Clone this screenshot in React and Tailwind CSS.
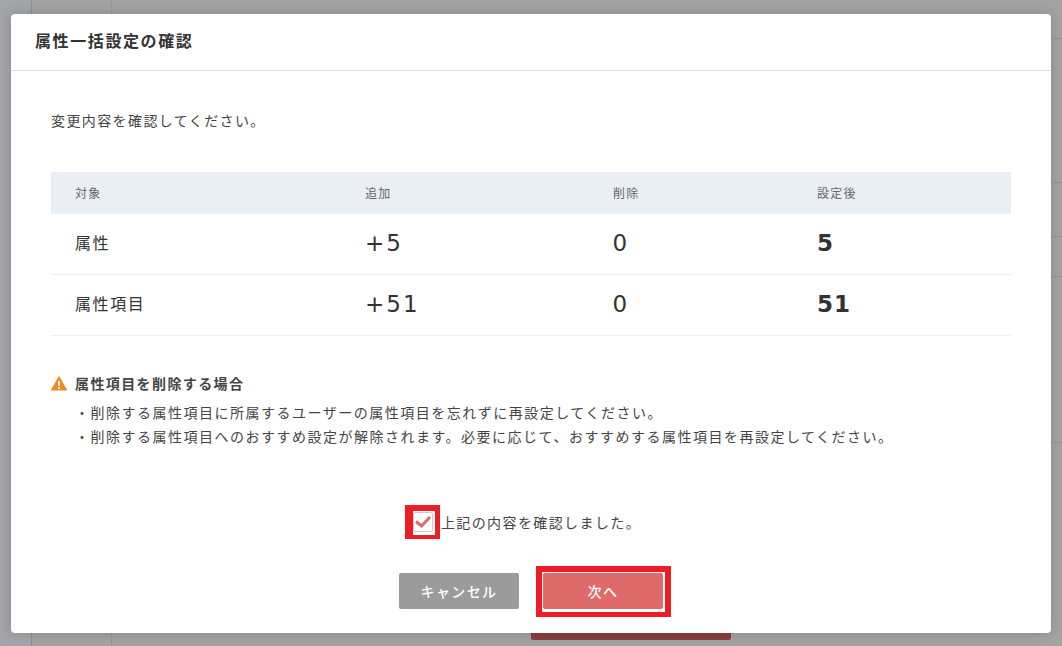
import React from "react";

const cjk = { fontFamily: '"Noto Sans CJK JP", sans-serif' };

function Row({ label, add, del, after }) {
  return (
    <div className="grid grid-cols-[290px_248px_204px_218px] h-[61px] items-center border-b border-[#f0f0f0] text-[#333]">
      <div className="pl-6 pb-[4px] text-[16px] tracking-[0.1em] leading-none">{label}</div>
      <div className="pl-6 pb-[2px] text-[23px] tracking-[2px] leading-none font-['DejaVu_Sans',sans-serif]">{add}</div>
      <div className="pl-[23.5px] pb-[2px] text-[23px] leading-none font-['DejaVu_Sans',sans-serif]">{del}</div>
      <div className="pl-6 pb-[2px] text-[23px] tracking-[1px] font-bold leading-none font-['DejaVu_Sans',sans-serif]">{after}</div>
    </div>
  );
}

export default function App() {
  return (
    <div className="relative w-[1062px] h-[646px] overflow-hidden bg-[#a3a3a3]" style={cjk}>
      {/* page behind the overlay */}
      <div className="flex h-full">
        <div className="w-[32px] bg-[#a4a5a8] border-r border-[#8e8e8e]" />
        <div className="w-[80px] border-r border-[#979797]" />
        <div className="flex-1 flex flex-col">
          <div className="h-[39px] border-b border-[#969696]" />
          <div className="h-[144px] border-b border-[#969696]" />
          <div className="h-[54px] border-b border-[#969696]" />
          <div className="h-[40px] border-b border-[#969696]" />
          <div className="h-[166px] border-b border-[#969696]" />
          <div className="flex-1 flex items-end pl-[419px] pb-[6px]">
            <div className="w-[200px] h-[40px] bg-[#8a3f3f] rounded-[2px]" />
          </div>
        </div>
      </div>

      {/* modal */}
      <div className="absolute left-[11px] top-[14px] w-[1040px] h-[619px] bg-white rounded-[4px] shadow-[0_0_12px_rgba(0,0,0,0.18)] flex flex-col">
        <div className="h-[57px] shrink-0 border-b border-[#dcdcdc] flex items-center pl-6 pb-[4px]">
          <h1 className="text-[16px] font-bold tracking-[0.1em] text-[#333] leading-none">属性一括設定の確認</h1>
        </div>

        <div className="flex-1 px-10 flex flex-col">
          <p className="mt-[39px] text-[14px] leading-[20px] tracking-[0.1em] text-[#444]">変更内容を確認してください。</p>

          <div className="mt-[42px]">
            <div className="grid grid-cols-[290px_248px_204px_218px] h-[42px] items-center bg-[#eaeff6] text-[12px] tracking-[0.1em] text-[#666]">
              <div className="pl-6">対象</div>
              <div className="pl-6">追加</div>
              <div className="pl-6">削除</div>
              <div className="pl-6">設定後</div>
            </div>
            <Row label="属性" add="+5" del="0" after="5" />
            <Row label="属性項目" add="+51" del="0" after="51" />
          </div>

          <div className="mt-[37px] flex items-center gap-[8px] h-[20px]">
            <svg width="16" height="15" viewBox="0 0 16 15" className="shrink-0">
              <path d="M8 1 L15.5 14 H0.5 Z" fill="#ee8a1f" stroke="#ee8a1f" strokeLinejoin="round" strokeWidth="1.2" />
              <rect x="7.1" y="5" width="1.8" height="5" fill="#fff" />
              <rect x="7.1" y="11" width="1.8" height="1.8" fill="#fff" />
            </svg>
            <span className="text-[14px] font-bold tracking-[0.1em] text-[#444]">属性項目を削除する場合</span>
          </div>
          <ul className="mt-[7px] pl-[24px] text-[14px] leading-[24px] tracking-[1.5px] text-[#444]">
            <li>・削除する属性項目に所属するユーザーの属性項目を忘れずに再設定してください。</li>
            <li>・削除する属性項目へのおすすめ設定が解除されます。必要に応じて、おすすめする属性項目を再設定してください。</li>
          </ul>

          <div className="mt-[64px] h-[20px] flex justify-center items-center">
            <div className="flex items-center ml-[-8px]">
              <span className="relative w-[20px] h-[20px] border border-[#ccc] rounded-[2px] bg-white flex items-center justify-center shrink-0">
                <svg width="20" height="20" viewBox="0 0 20 20" className="absolute -left-px -top-px">
                  <path d="M3 9.5 L8.5 14 L17 5" fill="none" stroke="#e06a6a" strokeWidth="3" />
                </svg>
                <span className="absolute -left-[9px] -top-[8px] w-[35px] h-[34px] border-t-[6px] border-l-[8px] border-r-[5px] border-b-[4px] border-[#ee1c25]" />
              </span>
              <span className="ml-[8px] text-[14px] leading-[20px] tracking-[0.1em] text-[#444]">上記の内容を確認しました。</span>
            </div>
          </div>

          <div className="mt-[41px] flex justify-center items-center gap-[24px]">
            <button className="w-[120px] h-[36px] bg-[#9b9b9b] rounded-[2px] text-white text-[14px] font-medium tracking-[0.1em]">キャンセル</button>
            <span className="relative block">
              <button className="block w-[120px] h-[36px] bg-[#e06a6a] rounded-[2px] text-white text-[14px] font-medium tracking-[0.1em]">次へ</button>
              <span className="absolute -left-[7px] -top-[7px] w-[135px] h-[51px] border-[6px] border-b-[5px] border-[#ee1c25]" />
            </span>
          </div>
        </div>
      </div>
    </div>
  );
}
